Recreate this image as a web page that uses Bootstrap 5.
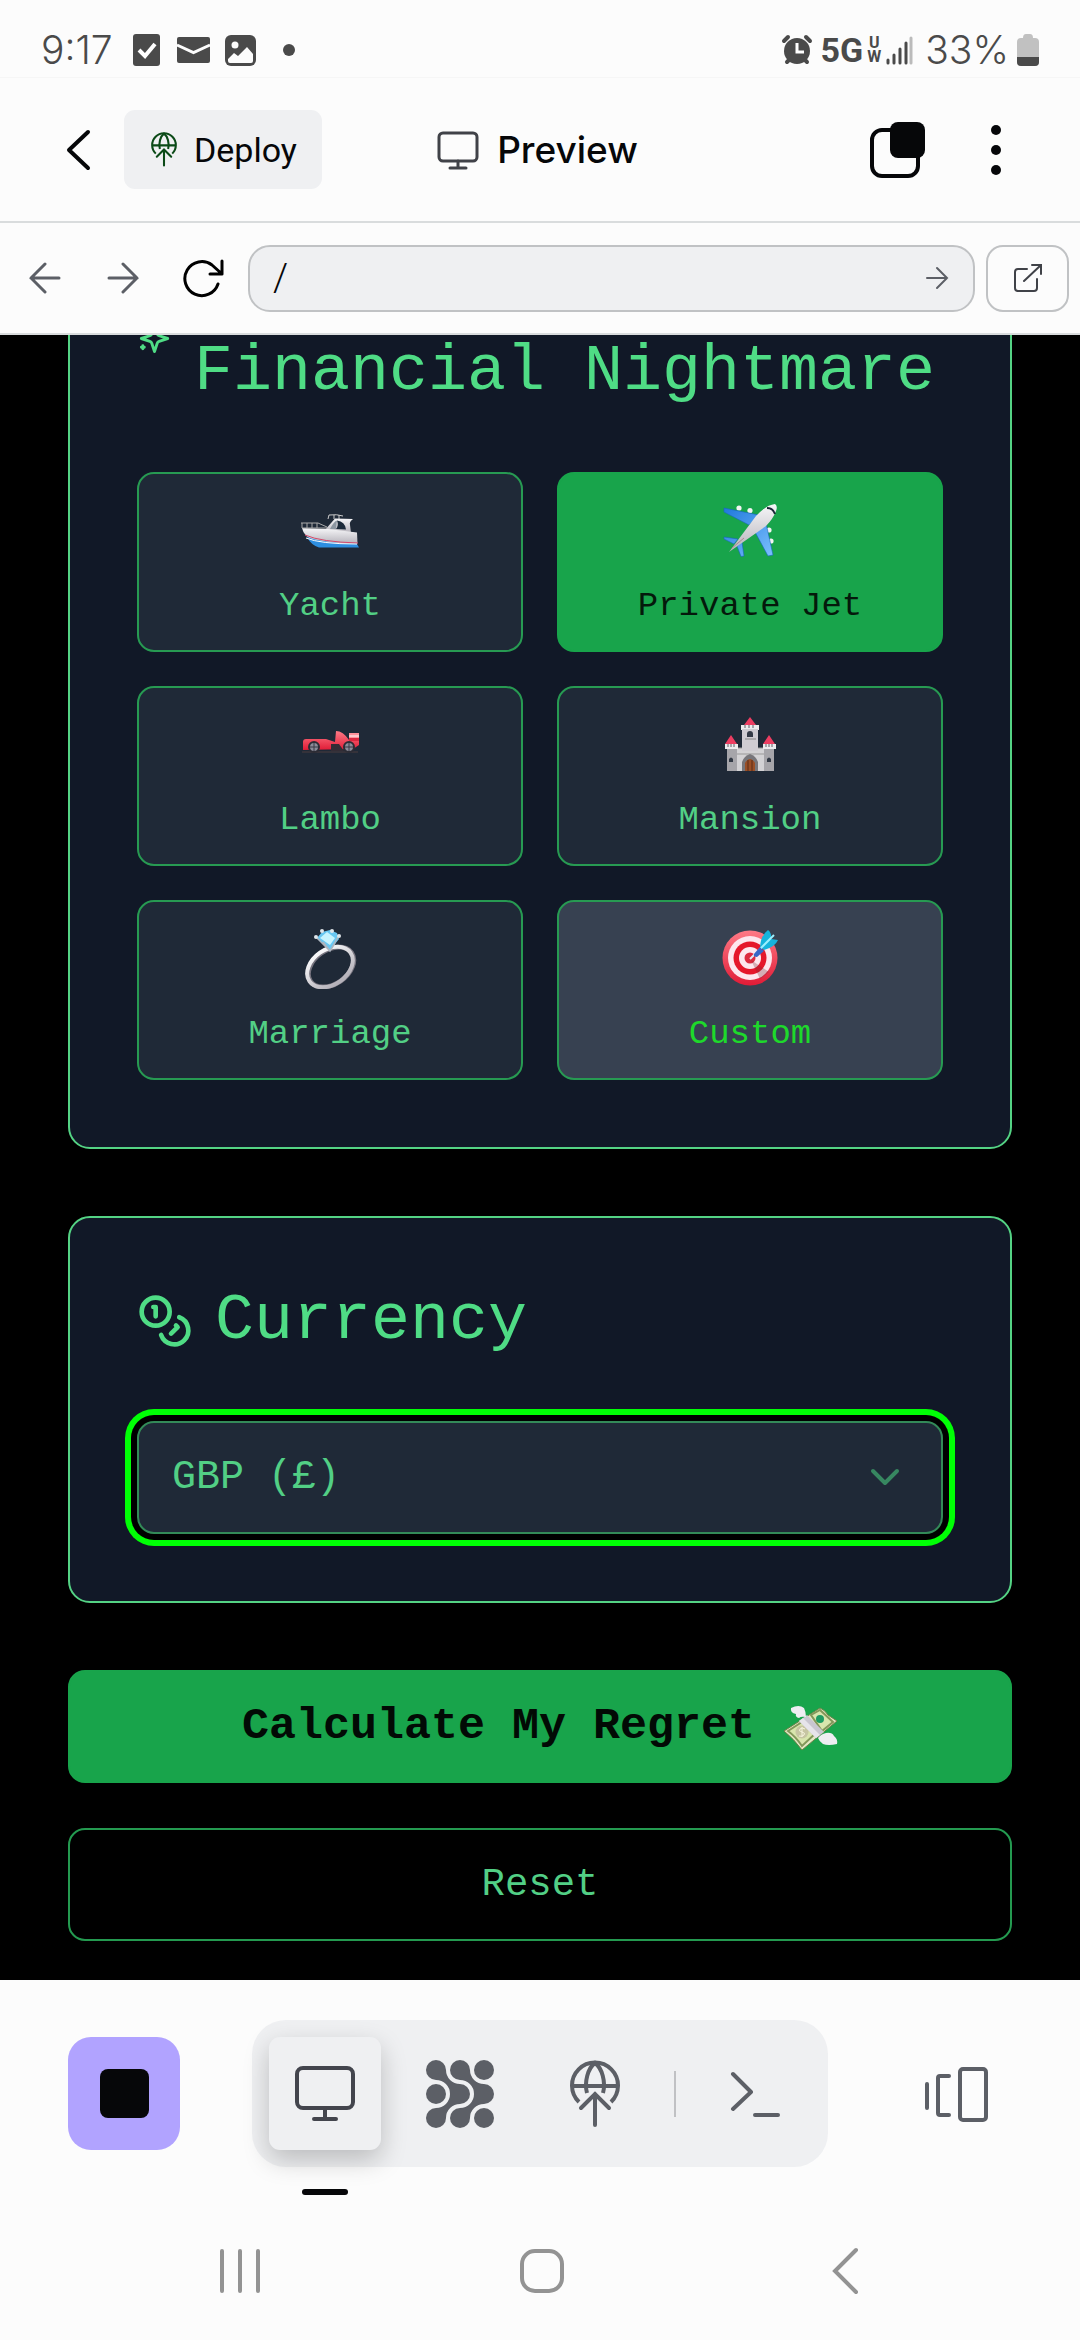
<!DOCTYPE html>
<html lang="en">
<head>
<meta charset="utf-8">
<meta name="viewport" content="width=device-width, initial-scale=1">
<title>Preview</title>
<link href="https://cdn.jsdelivr.net/npm/bootstrap@5.3.0/dist/css/bootstrap.min.css" rel="stylesheet">
<style>
  :root { --ink:#060709; --soft:#eff0f2; --slate:#5c5f66; --mint:#4ade80; --leaf:#16a34a; --night:#111827; --panel:#1f2937; }
  body { background:#fcfcfc; color:var(--ink); font-family:Inter, Roboto, sans-serif; }
  svg { display:block; flex:none; }
  .icon-btn { display:flex; align-items:center; justify-content:center; border:0; background:none; padding:0; color:inherit; }
  .side { flex:1 1 0; }

  .status { height:78px; padding:22px 41px 0; border-bottom:1px solid #f6f6f6; color:#4a4a4a; }
  .status-text { font-size:39px; line-height:48px; font-weight:300; }
  .status-left { gap:20px; }
  .net { font-family:Roboto, sans-serif; font-weight:700; font-size:34px; line-height:48px; }
  .net-sub { font-family:Roboto, sans-serif; font-weight:700; font-size:16px; line-height:14px; text-align:center; }

  .app-head { height:145px; border-bottom:2px solid #d9dcdd; padding-left:50px; padding-right:55px; }
  .head-btn { width:58px; height:80px; }
  .deploy { height:79px; padding:0 25px 0 26px; gap:16px; border-radius:11px; background:var(--soft); color:var(--ink); font-family:Roboto, sans-serif; font-size:34px; line-height:40px; border:0; }
  .app-title { font-size:37px; line-height:44px; font-weight:500; gap:18px; }

  .address { height:112px; padding:0 11px 0 14px; border-bottom:2px solid #d9dcdd; gap:16px; }
  .tool-btn { width:62px; height:67px; color:var(--slate); }
  .url-group { gap:11px; }
  .url-box { height:67px; border:2px solid #c0c2c4; border-radius:22px; background:var(--soft); padding-left:23px; padding-right:24px; }
  .url-box input { background:none; border:0; outline:0; font-family:Roboto, sans-serif; font-size:38px; line-height:44px; font-weight:300; color:var(--ink); width:100%; padding:0; }
  .go-btn { color:var(--slate); }
  .open-btn { width:83px; height:67px; border:2px solid #c0c2c4; border-radius:17px; color:#404248; }

  .screen { background:#000; overflow:hidden; font-family:"Liberation Mono", monospace; padding:0 68px 39px; }
  .screen-body { margin-top:-136px; }
  .panel { background:var(--night); border:2px solid #54d384; border-radius:22px; padding:67px; margin-bottom:67px; }
  .panel-title { color:#4fdc85; font-size:65px; line-height:72px; font-weight:400; margin:0 0 64px; gap:22px; white-space:nowrap; }
  .two-line { min-height:140px; }
  .coins { width:56px; height:56px; }
  .choices { display:grid; grid-template-columns:1fr 1fr; gap:34px; }
  .choice { height:180px; border:2px solid #279a52; border-radius:17px; background:var(--panel); color:#52cf85; font-size:34px; line-height:48px; padding:27px 10px 20px; gap:21px; }
  .choice-on { background:#18a44b; border-color:#18a44b; color:#04190b; }
  .choice-hover { background:#374151; color:#1ed92b; }
  .field { height:113px; border:2px solid #338a58; border-radius:17px; background:var(--panel); color:#52cf85; font-size:40px; line-height:48px; padding:0 100px 0 33px; background-image:none; box-shadow:0 0 0 6px #000, 0 0 0 12px #00ff05; }
  .field:focus { background-color:var(--panel); color:#52cf85; border-color:#338a58; box-shadow:0 0 0 6px #000, 0 0 0 12px #00ff05; }
  .field-caret { right:43px; top:47px; pointer-events:none; }
  .act { height:113px; border-radius:17px; border:2px solid #18a44b; }
  .act-main { background:#18a44b; color:#020a05; font-size:45px; line-height:56px; font-weight:700; gap:27px; }
  .act-reset { background:#000; border-color:#249a50; color:#52cf85; font-size:39px; line-height:48px; margin-top:45px; }

  .dock-row { padding:40px 68px 0; }
  .dock { background:var(--soft); border-radius:34px; padding:17px; gap:23px; }
  .dock-btn { width:112px; height:113px; color:var(--slate); }
  .dock-on { position:relative; background:var(--soft); border-radius:11px; color:#43454d; box-shadow:0 10px 26px rgba(0,0,0,.22); }
  .dock-mark { position:absolute; left:33px; top:152px; width:46px; height:6px; border-radius:3px; background:var(--ink); }
  .stop { background:#b1a3ff; border-radius:23px; }
  .stop-mark { width:49px; height:49px; border-radius:8px; background:var(--ink); }
  .dock-rule { width:2px; height:46px; background:#c0c1c4; }
  .sys-nav { padding:60px 84px 25px 89px; color:#939393; }
  .sys-btn { height:88px; flex:1 1 0; }
</style>
</head>
<body>

<svg width="0" height="0" class="position-absolute" aria-hidden="true">
  <defs>
    <g id="globe" fill="none" stroke="currentColor" stroke-width="4" stroke-linecap="round">
      <path d="M9 42A23 23 0 1 1 41 42M2.500 26H47.500" stroke-linecap="butt"/>
      <path d="M17 33C14 22 18 8 25 3C32 8 36 22 33 33" stroke-linecap="butt"/>
      <path d="M25 65V34M11 48L25 34L39 48"/>
    </g>
    <linearGradient id="steel" x1="0" y1="0" x2="0" y2="1"><stop offset="0" stop-color="#f7f7f9"/><stop offset="1" stop-color="#b5b2ba"/></linearGradient>
    <linearGradient id="rose" x1="0" y1="0" x2="0" y2="1"><stop offset="0" stop-color="#ff7a86"/><stop offset="1" stop-color="#e01b36"/></linearGradient>
    <linearGradient id="sky" x1="0" y1="0" x2="1" y2="1"><stop offset="0" stop-color="#1f78dc"/><stop offset="1" stop-color="#7cc0ff"/></linearGradient>
  </defs>
</svg>

<div class="status d-flex align-items-center justify-content-between">
  <div class="status-left d-flex align-items-center">
    <span class="status-text">9:17</span>
    <svg width="164" height="34" viewBox="0 0 164 34" fill="#4a4a4a" aria-hidden="true">
      <rect x="0" y="1" width="27" height="32" rx="3"/><path d="M6 17l6 6 10-12" fill="none" stroke="#fff" stroke-width="4"/>
      <rect x="44" y="4" width="33" height="26" rx="2"/><path d="M44 12l16.500 7.500L77 12" fill="none" stroke="#fcfcfc" stroke-width="3"/>
      <rect x="92" y="2" width="31" height="31" rx="6"/><circle cx="102" cy="12" r="3.500" fill="#fcfcfc"/><path d="M95 26l6-6 4 3 9-9 6 7v7q0 2-2 2H97q-2 0-2-2z" fill="#fcfcfc"/>
      <circle cx="156" cy="17" r="6"/>
    </svg>
  </div>
  <div class="d-flex align-items-center">
    <svg class="me-2" width="32" height="32" viewBox="0 0 32 32" aria-hidden="true">
      <g stroke="#4a4a4a" stroke-width="4" stroke-linecap="round"><path d="M3 7l4-4M29 7l-4-4M6 28l4-4M26 28l-4-4"/></g>
      <circle cx="16" cy="17" r="13" fill="#4a4a4a"/><path d="M16 9v9h7" fill="none" stroke="#fff" stroke-width="3"/>
    </svg>
    <span class="net">5G</span>
    <span class="d-flex flex-column net-sub mx-1"><span>U</span><span>W</span></span>
    <svg class="me-2" width="28" height="32" viewBox="0 0 28 32" stroke="#4a4a4a" stroke-width="3" stroke-linecap="round" aria-hidden="true"><path d="M3 26v3M9 21v8M15 15v14M21 9v20"/><path d="M26 4v25" stroke="#bbb"/></svg>
    <span class="status-text ms-1">33%</span>
    <svg class="ms-2" width="22" height="32" viewBox="0 0 22 32" aria-hidden="true"><path d="M6 4q0-4 3-4h4q3 0 3 4h2q4 0 4 4v20q0 4-4 4H4q-4 0-4-4V8q0-4 4-4z" fill="#c1c1c1"/><path d="M0 23h22v5q0 4-4 4H4q-4 0-4-4z" fill="#4a4a4a"/></svg>
  </div>
</div>

<header class="app-head d-flex align-items-center">
  <div class="side d-flex align-items-center">
    <button class="icon-btn head-btn me-3" aria-label="Back"><svg width="26" height="42" viewBox="0 0 26 42" fill="none" stroke="currentColor" stroke-width="4" stroke-linecap="round" stroke-linejoin="round"><path d="M22 3L3 21l19 18"/></svg></button>
    <button class="btn deploy d-flex align-items-center"><svg width="28" height="35" viewBox="-2 0 54 68" color="#0b4a17"><use href="#globe"/></svg>Deploy</button>
  </div>
  <h1 class="app-title d-flex align-items-center m-0">
    <svg width="42" height="40" viewBox="0 0 42 40" fill="none" stroke="#404248" stroke-width="3" stroke-linecap="round" aria-hidden="true"><rect x="2" y="3" width="38" height="28" rx="4"/><path d="M21 31v7M13 38h16"/></svg>
    Preview
  </h1>
  <div class="side d-flex align-items-center justify-content-end gap-4">
    <button class="icon-btn head-btn" aria-label="Tabs"><svg width="56" height="56" viewBox="0 0 56 56"><rect x="2" y="8" width="46" height="46" rx="10" fill="none" stroke="#060709" stroke-width="4"/><rect x="20" y="0" width="35" height="36" rx="8" fill="#060709"/></svg></button>
    <button class="icon-btn head-btn ms-3" aria-label="More"><svg width="12" height="52" viewBox="0 0 12 52" fill="currentColor"><circle cx="6" cy="6" r="5"/><circle cx="6" cy="26" r="5"/><circle cx="6" cy="46" r="5"/></svg></button>
  </div>
</header>

<nav class="address d-flex align-items-center">
  <button class="icon-btn tool-btn" aria-label="Page back"><svg width="32" height="32" viewBox="0 0 32 32" fill="none" stroke="currentColor" stroke-width="3" stroke-linecap="round"><path d="M30 16H2M16 2L2 16l14 14"/></svg></button>
  <button class="icon-btn tool-btn" aria-label="Page forward"><svg width="32" height="32" viewBox="0 0 32 32" fill="none" stroke="currentColor" stroke-width="3" stroke-linecap="round"><path d="M2 16h28M16 2l14 14-14 14"/></svg></button>
  <button class="icon-btn tool-btn text-black" aria-label="Reload"><svg width="46" height="40" viewBox="0 0 46 40" fill="none" stroke="currentColor" stroke-width="3" stroke-linecap="round" stroke-linejoin="round"><path d="M40 26A17 17 0 1 1 34 7L44 16M44 3v13H32"/></svg></button>
  <div class="url-group d-flex align-items-center flex-grow-1">
    <form class="url-box d-flex align-items-center flex-grow-1">
      <input type="text" value="/" aria-label="Path">
      <button type="button" class="icon-btn go-btn" aria-label="Go"><svg width="24" height="24" viewBox="0 0 24 24" fill="none" stroke="currentColor" stroke-width="2"><path d="M2 12h20M12 2l10 10-10 10" stroke-linecap="round"/></svg></button>
    </form>
    <button class="icon-btn open-btn" aria-label="Open in new window"><svg width="30" height="30" viewBox="0 0 30 30" fill="none" stroke="currentColor" stroke-width="2" stroke-linecap="round"><path d="M14 6H5q-3 0-3 3v16q0 3 3 3h16q3 0 3-3v-9M11 18L28 2M19 2h9v9"/></svg></button>
  </div>
</nav>

<main class="screen">
  <div class="screen-body">
    <section class="panel">
      <h2 class="panel-title two-line d-flex align-items-center">
        <svg width="35" height="35" viewBox="0 0 24 24" fill="none" stroke="currentColor" stroke-width="2" stroke-linecap="round" stroke-linejoin="round" aria-hidden="true"><path d="M12 3l-1.900 5.800a2 2 0 0 1-1.300 1.300L3 12l5.800 1.900a2 2 0 0 1 1.300 1.300L12 21l1.900-5.800a2 2 0 0 1 1.300-1.300L21 12l-5.800-1.900a2 2 0 0 1-1.300-1.300z"/><path d="M4 17v2M5 18H3M20 3v4M22 5h-4"/></svg>
        <span class="align-self-end">Financial Nightmare</span>
      </h2>
      <div class="choices">
        <button class="choice d-flex flex-column align-items-center">
          <svg width="60" height="60" viewBox="0 0 60 60" aria-hidden="true">
            <path d="M28 18l1-4q8-1 14 1M34 14v4M39 14v4" fill="none" stroke="#ccc" stroke-width="1"/>
            <path d="M24 30l11-12.500L53 18q-4 3-3 6l1 8z" fill="url(#steel)"/><path d="M30 28q4-8 7-8.500L36 28z" fill="#8c96a1"/><path d="M37 19.500q8 1 9 9l-10-.5q3-3 1-8.500z" fill="#1c2a3a"/>
            <path d="M2 27l26 1 29 3.500.5 11-24 .5-20-4Q4 36 2 27z" fill="url(#steel)"/>
            <path d="M7 36q16 6 50 7l2 3.500H19Q11 44 7 36z" fill="#2e8ee0"/><path d="M5 34q16 7 53 8" fill="none" stroke="#d4486c" stroke-width="1"/><path d="M6 37q14 6 51 6" fill="none" stroke="#fff" stroke-width="1"/>
            <path d="M1 22h17l9 4M2 22v5M7 22v5M12 22v5M17 22v5M2 27h25" fill="none" stroke="#aaa" stroke-width="1"/>
          </svg>
          <span>Yacht</span>
        </button>
        <button class="choice choice-on d-flex flex-column align-items-center">
          <svg width="60" height="60" viewBox="0 0 60 60" aria-hidden="true">
            <g fill="#f4f4f4"><circle cx="19" cy="7" r="2.600"/><circle cx="30" cy="9.500" r="2.600"/><circle cx="49" cy="29" r="2.600"/><circle cx="51" cy="40" r="2.600"/></g>
            <g fill="url(#sky)" stroke="#1766b8" stroke-width=".6"><path d="M4 7L39 14 29 24 4 11zM46 22L53 54l-5 1L35 31zM4 36l14 2-4 5L4 38zM17 45l5-4 2 14-3 .5z"/></g>
            <path d="M9 51L36 15Q46 4 55 3q3 2 1 7-3 8-10 15z" fill="url(#steel)"/><path d="M47 7q6 0 8 6" fill="none" stroke="#1a2538" stroke-width="2"/><path d="M12 47l12-10" stroke="#ad8790" stroke-width="1"/>
          </svg>
          <span>Private Jet</span>
        </button>
        <button class="choice d-flex flex-column align-items-center">
          <svg width="60" height="60" viewBox="0 0 60 60" aria-hidden="true">
            <path d="M2 37h56" stroke="#35323a" stroke-width="2"/>
            <path d="M3 35v-8q0-3 3-3h20l9 3 1-11q7 0 13 9h7v-7h3v12l-6 4z" fill="url(#rose)"/>
            <path d="M49 18h10v5H49z" fill="#ff929b"/><path d="M49 21h10" stroke="#fff" stroke-width="1"/><path d="M49 23h10v3H49z" fill="#dc2740"/><path d="M31 29h8l5 7H31z" fill="#332c35"/>
            <g fill="#8b8c99" stroke="#2c2c35" stroke-width="2"><circle cx="14" cy="32" r="5"/><circle cx="49" cy="32" r="5"/></g><g stroke="#393944" stroke-width="1"><path d="M14 28v8M10 32h8M49 28v8M45 32h8"/></g>
          </svg>
          <span>Lambo</span>
        </button>
        <button class="choice d-flex flex-column align-items-center">
          <svg width="60" height="60" viewBox="0 0 60 60" aria-hidden="true">
            <path d="M17 33h27v23H17z" fill="#d3d2d5"/><path d="M17 33h27M17 39h27" stroke="#999" stroke-width="1"/>
            <path d="M7 33h10v23H7zM44 33h10v23H44z" fill="#a6a5aa"/><path d="M5 29h13v5H5zM43 29h13v5H43zM21 10h18v5H21z" fill="#ecebed"/><path d="M22 14h16v22H22z" fill="#cfccd2"/>
            <path d="M30 2l6 8H24zM11 20l6 9H5zM49 20l6 9H43z" fill="#ec3d61"/>
            <path d="M27 22v-3q0-3 3-3t3 3v3zM9 47v-3q2-3 4 0v3zM47 47v-3q2-3 4 0v3z" fill="#333a46"/><path d="M25 24h11" stroke="#888" stroke-width="1"/>
            <path d="M22 56V47q2-6 8-8 6 2 8 8v9z" fill="#77767b"/><path d="M25 56v-8q5-8 10 0v8z" fill="#9a4f27"/><path d="M28 45v11M32 45v11" stroke="#5a2d16" stroke-width="1"/>
            <path d="M8 29v3M11 29v3M14 29v3M46 29v3M49 29v3M52 29v3M25 10v3M29 10v3M33 10v3" stroke="#5e5f66" stroke-width="1"/>
          </svg>
          <span>Mansion</span>
        </button>
        <button class="choice d-flex flex-column align-items-center">
          <svg width="60" height="60" viewBox="0 0 60 60" aria-hidden="true">
            <ellipse cx="31" cy="38" rx="25" ry="17" transform="rotate(-35 31 38)" fill="none" stroke="#77747f" stroke-width="5"/>
            <ellipse cx="30" cy="38" rx="25" ry="17.500" transform="rotate(-35 30 38)" fill="none" stroke="url(#steel)" stroke-width="4"/>
            <path d="M17 9l5-6 8-2 7 3 2 6-9 11z" fill="#69c7f2"/><path d="M20 9l7-6 8 6-5 7z" fill="#c8f4ff"/>
            <path d="M16 8l14 14 8-14M23 13l7 9 5-8" fill="none" stroke="#adb5bf" stroke-width="1.500"/><g fill="#dfe5ea"><circle cx="16" cy="8" r="2"/><circle cx="39" cy="7" r="2"/><circle cx="22" cy="2" r="2"/><circle cx="32" cy="2" r="2"/></g>
          </svg>
          <span>Marriage</span>
        </button>
        <button class="choice choice-hover d-flex flex-column align-items-center">
          <svg width="60" height="60" viewBox="0 0 60 60" aria-hidden="true">
            <circle cx="30" cy="29" r="27.500" fill="url(#rose)"/><circle cx="30" cy="29" r="22" fill="#fde7ee"/><circle cx="30" cy="29" r="16.500" fill="#e5172b"/><circle cx="30" cy="29" r="11" fill="#fde7ee"/><circle cx="30" cy="29" r="5.500" fill="#dc2b3f"/>
            <path d="M31 31l9 19 9-7z" fill="#7b2932" opacity=".3"/>
            <path d="M30 30l14-14" stroke="#e2e8f5" stroke-width="2"/><path d="M34 25l6-7 4 4-7 6q-4 0-3-3z" fill="#3767c7"/><path d="M40 18q1-12 8-17 4 3 3 9l7 1q-3 7-14 10z" fill="#16b3dc"/><path d="M41 19L54 6" stroke="#9bf0ff" stroke-width="2"/>
          </svg>
          <span>Custom</span>
        </button>
      </div>
    </section>

    <section class="panel">
      <h2 class="panel-title d-flex align-items-center">
        <svg class="coins" viewBox="0 0 24 24" fill="none" stroke="currentColor" stroke-width="2" stroke-linecap="round" stroke-linejoin="round" aria-hidden="true"><circle cx="8" cy="8" r="6"/><path d="M18.090 10.370A6 6 0 1 1 10.340 18M7 6h1v4M16.710 13.880l.7.710-2.820 2.820"/></svg>
        <label for="currency">Currency</label>
      </h2>
      <div class="position-relative">
        <select id="currency" class="form-select field"><option>GBP (£)</option></select>
        <svg class="field-caret position-absolute" width="30" height="19" viewBox="0 0 30 19" fill="none" stroke="#378760" stroke-width="4" stroke-linecap="round" stroke-linejoin="round" aria-hidden="true"><path d="M3 3l12 12L27 3"/></svg>
      </div>
    </section>

    <button class="act act-main w-100 d-flex align-items-center justify-content-center">Calculate My Regret
      <svg width="56" height="48" viewBox="0 0 56 48" aria-hidden="true">
        <path d="M2 28L38 5q5 2 8 7l9 6L20 47Q12 36 2 28z" fill="#e3e8c4" stroke="#6d8248" stroke-width="1"/>
        <path d="M6 28L23 17l12 12-15 14Q14 34 6 28zM29 12l9-5 13 12-11 9z" fill="#d8e5ad" stroke="#83975a" stroke-width="2"/>
        <circle cx="38" cy="16" r="4" fill="#1f9c63"/><circle cx="20" cy="29" r="6.500" fill="#c6c5a2"/>
        <path d="M23 26q-3-2-5 0t2 3 2 3-5 1M20 24v10" fill="none" stroke="#f7f5df" stroke-width="1"/>
        <path d="M17 18l8-6 17 17-8 6z" fill="#c9c6d0"/><path d="M17 18l4-3 17 17-4 3z" fill="#e6e4ea"/>
        <path d="M24 14q-5-1-7 1-4-1-3-4-6-1-5-6 8-4 13 0 2 4 2 9zM36 35q3-4 8-5 6-1 8 3 4 3 3 8-9 2-14 0-4-3-5-6z" fill="#eeedf2"/>
      </svg>
    </button>
    <button class="act act-reset d-block w-100">Reset</button>
  </div>
</main>

<footer>
  <div class="dock-row d-flex align-items-center justify-content-between">
    <button class="icon-btn dock-btn stop" aria-label="Stop"><span class="stop-mark"></span></button>
    <div class="dock d-flex align-items-center">
      <button class="icon-btn dock-btn dock-on" aria-label="Preview"><svg width="60" height="58" viewBox="0 0 60 58" fill="none" stroke="currentColor" stroke-width="4" stroke-linecap="round"><rect x="2" y="3" width="56" height="40" rx="6"/><path d="M30 43v11M19 54h22"/></svg><span class="dock-mark"></span></button>
      <button class="icon-btn dock-btn" aria-label="Agent"><svg width="68" height="68" viewBox="0 0 68 68" fill="currentColor">
        <circle cx="10" cy="10" r="10"/><circle cx="34" cy="10" r="10"/><circle cx="58" cy="10" r="10"/><circle cx="10" cy="34" r="10"/><circle cx="34" cy="34" r="10"/><circle cx="58" cy="34" r="10"/><circle cx="10" cy="58" r="10"/><circle cx="34" cy="58" r="10"/><circle cx="58" cy="58" r="10"/>
        <path d="M20 10A14 14 0 0 0 34 24V34H24A14 14 0 0 0 10 20V10zM44 10A14 14 0 0 0 58 24V34H48A14 14 0 0 0 34 20V10zM20 58A14 14 0 0 1 34 44V34H24A14 14 0 0 1 10 48V58zM44 58A14 14 0 0 1 58 44V34H48A14 14 0 0 1 34 48V58z"/></svg></button>
      <button class="icon-btn dock-btn" aria-label="Deployments"><svg width="50" height="68" viewBox="0 0 50 68"><use href="#globe"/></svg></button>
      <span class="dock-rule"></span>
      <button class="icon-btn dock-btn" aria-label="Console"><svg width="50" height="46" viewBox="0 0 50 46" fill="none" stroke="currentColor" stroke-width="4" stroke-linecap="round" stroke-linejoin="round"><path d="M3 3l18 18L3 38M25 44h23"/></svg></button>
    </div>
    <button class="icon-btn dock-btn" aria-label="Switch layout"><svg width="64" height="56" viewBox="0 0 64 56" fill="none" stroke="currentColor" stroke-width="4" stroke-linecap="round" stroke-linejoin="round"><path d="M3 18v24M25 10H16q-2 0-2 2v35q0 2 2 2h9"/><rect x="36" y="3" width="26" height="51" rx="3"/></svg></button>
  </div>
  <nav class="sys-nav d-flex">
    <button class="icon-btn sys-btn" aria-label="Recent apps"><svg width="42" height="46" viewBox="0 0 42 46" stroke="currentColor" stroke-width="4" stroke-linecap="round"><path d="M3 3v40M21 3v40M39 3v40"/></svg></button>
    <button class="icon-btn sys-btn" aria-label="Home"><svg width="46" height="46" viewBox="0 0 46 46" fill="none" stroke="currentColor" stroke-width="4"><rect x="3" y="3" width="40" height="40" rx="13"/></svg></button>
    <button class="icon-btn sys-btn" aria-label="System back"><svg width="28" height="48" viewBox="0 0 28 48" fill="none" stroke="currentColor" stroke-width="4" stroke-linecap="round"><path d="M25 3L4 24l21 21"/></svg></button>
  </nav>
</footer>
<script src="https://cdn.jsdelivr.net/npm/bootstrap@5.3.0/dist/js/bootstrap.bundle.min.js"></script>
</body>
</html>
